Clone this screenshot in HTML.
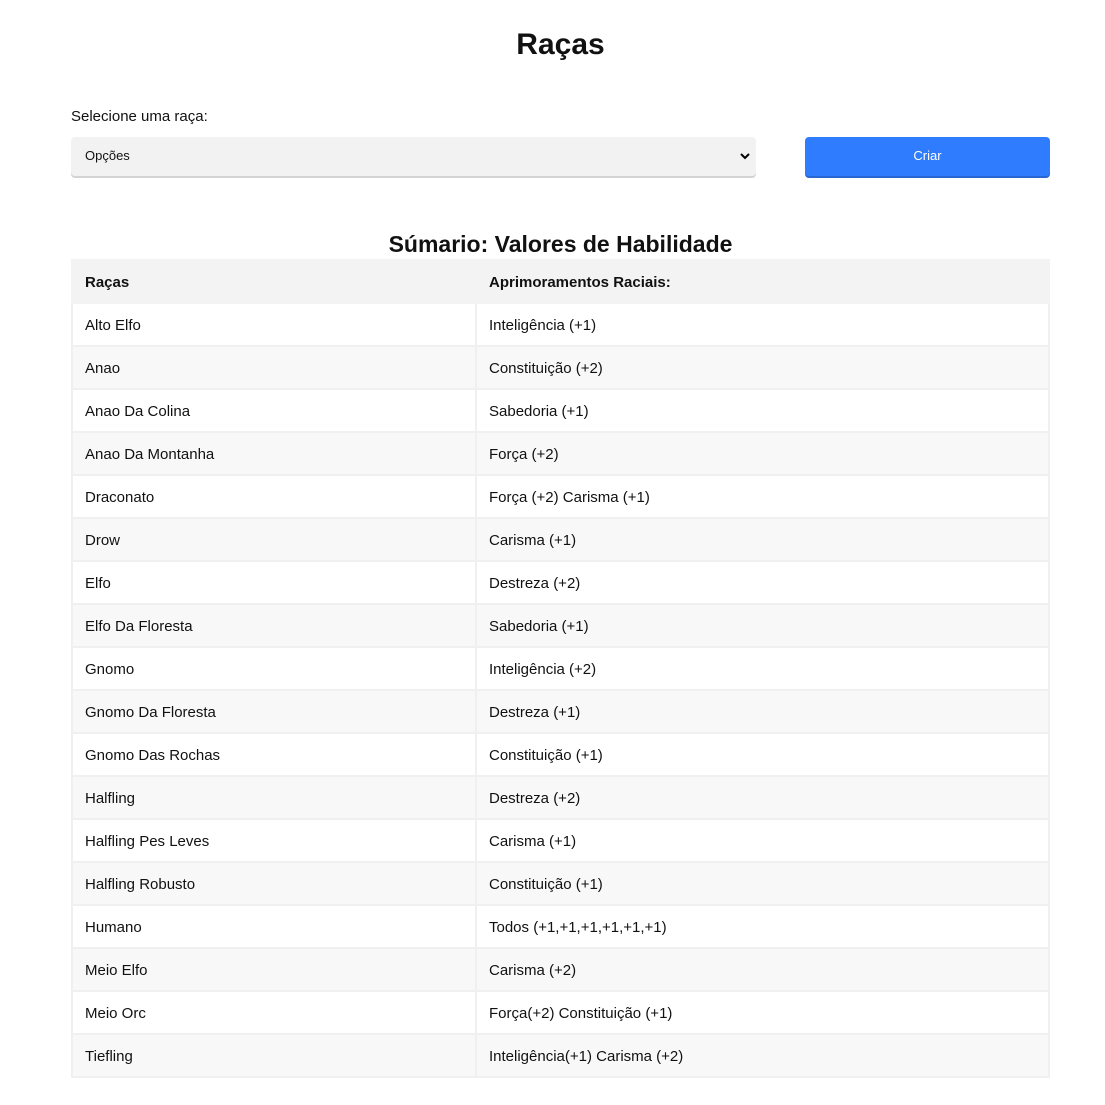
<!DOCTYPE html>
<html><head><meta charset="utf-8"><style>
*{box-sizing:border-box}
body{margin:0;background:#fff;font-family:"Liberation Sans","DejaVu Sans",sans-serif;color:#111;width:1105px;height:1105px;overflow:hidden}
h1{position:absolute;top:26px;left:0;width:1121px;text-align:center;margin:0;font-size:30px;font-weight:bold;line-height:38px}
.lbl{position:absolute;left:71px;top:108px;font-size:15px}
.sel{position:absolute;left:71px;top:137px;width:685px;height:39px;background:#f2f2f2;border-radius:4px;box-shadow:0 2px 0 #d4d4d4;font-size:13px;padding:11px 14px}
.sel svg{position:absolute;right:6px;top:15px}
.btn{position:absolute;left:805px;top:137px;width:245px;height:39px;background:#2f7cfe;border-radius:4px;box-shadow:0 2px 0 #2a66d0;color:#fff;font-size:13px;text-align:center;line-height:37px}
h2{position:absolute;top:228px;left:0;width:1121px;text-align:center;margin:0;font-size:23px;line-height:32px}
table{position:absolute;left:71px;top:259px;width:979px;border-collapse:collapse;font-size:15px}
td,th{height:43px;padding:1px 12px 0;text-align:left;border:2px solid #f0f0f0}
th{background:#f3f3f3;font-weight:bold;border-color:#f3f3f3}
td:first-child,th:first-child{width:404px}
tr:nth-child(even) td{background:#f8f8f8}
tr:nth-child(odd) td{background:#fff}
</style></head><body>
<h1>Raças</h1>
<div class="lbl">Selecione uma raça:</div>
<div class="sel">Opções<svg width="10" height="8" viewBox="0 0 10 8"><path d="M1 2l4 4 4-4" stroke="#000" stroke-width="2" fill="none"/></svg></div>
<div class="btn">Criar</div>
<h2>Súmario: Valores de Habilidade</h2>
<table>
<thead><tr><th>Raças</th><th>Aprimoramentos Raciais:</th></tr></thead>
<tbody>
<tr><td>Alto Elfo</td><td>Inteligência (+1)</td></tr>
<tr><td>Anao</td><td>Constituição (+2)</td></tr>
<tr><td>Anao Da Colina</td><td>Sabedoria (+1)</td></tr>
<tr><td>Anao Da Montanha</td><td>Força (+2)</td></tr>
<tr><td>Draconato</td><td>Força (+2) Carisma (+1)</td></tr>
<tr><td>Drow</td><td>Carisma (+1)</td></tr>
<tr><td>Elfo</td><td>Destreza (+2)</td></tr>
<tr><td>Elfo Da Floresta</td><td>Sabedoria (+1)</td></tr>
<tr><td>Gnomo</td><td>Inteligência (+2)</td></tr>
<tr><td>Gnomo Da Floresta</td><td>Destreza (+1)</td></tr>
<tr><td>Gnomo Das Rochas</td><td>Constituição (+1)</td></tr>
<tr><td>Halfling</td><td>Destreza (+2)</td></tr>
<tr><td>Halfling Pes Leves</td><td>Carisma (+1)</td></tr>
<tr><td>Halfling Robusto</td><td>Constituição (+1)</td></tr>
<tr><td>Humano</td><td>Todos (+1,+1,+1,+1,+1,+1)</td></tr>
<tr><td>Meio Elfo</td><td>Carisma (+2)</td></tr>
<tr><td>Meio Orc</td><td>Força(+2) Constituição (+1)</td></tr>
<tr><td>Tiefling</td><td>Inteligência(+1) Carisma (+2)</td></tr>
</tbody></table>
</body></html>
